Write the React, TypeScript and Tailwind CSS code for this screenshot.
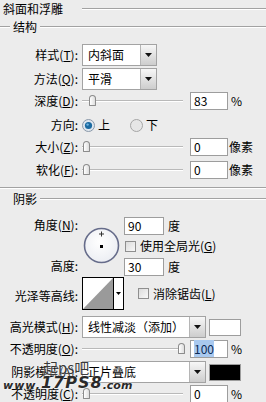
import type { ReactNode } from "react";

const Label = ({ children }: { children: ReactNode }) => (
  <div className="w-[78px] shrink-0 text-right whitespace-nowrap">{children}</div>
);

const Arrow = () => (
  <div className="w-[16px] h-full shrink-0 border-l border-[#b5b5b5] bg-gradient-to-b from-[#f7f7f7] to-[#cdcdcd] flex items-center justify-center">
    <svg width="7" height="4" viewBox="0 0 7 4">
      <path d="M0 0h7L3.5 4z" fill="#111" />
    </svg>
  </div>
);

const Dropdown = ({ value, w }: { value: string; w: string }) => (
  <div className={`${w} h-[22px] ml-[4px] flex border border-[#a3a3a3] bg-white`}>
    <span className="flex-1 pl-[5px] leading-[20px]">{value}</span>
    <Arrow />
  </div>
);

const Slider = ({ pos }: { pos: number }) => (
  <div className="relative w-[101px] h-[18px] ml-[4px] flex items-center">
    <div className="w-full h-[2px] bg-[#b9b9b9] border-b border-white" />
    <div
      className="absolute top-[3px] w-[7px] h-[11px] rounded-t-[4px] rounded-b-[1px] border border-[#8c8c8c] bg-gradient-to-r from-white to-[#dedede]"
      style={{ left: pos }}
    />
  </div>
);

const Input = ({ value, w = "w-[38px]", selected }: { value: string; w?: string; selected?: boolean }) => (
  <div className={`${w} h-[18px] border border-[#9d9d9d] bg-white pl-[3px] leading-[16px]`}>
    {selected ? <span className="bg-[#a9c9ef] text-[#0b2a55]">{value}</span> : value}
  </div>
);

const Check = () => (
  <div className="w-[11px] h-[11px] border border-[#8f8f8f] bg-gradient-to-br from-[#dcdcdc] to-[#f8f8f8]" />
);

export default function App() {
  return (
    <div className="relative w-[266px] h-[402px] overflow-hidden bg-[#ececec] text-[12px] text-black font-['Noto_Sans_CJK_SC','Noto_Sans',sans-serif]">
      {/* title */}
      <div className="h-[17px] flex items-center">
        <span className="pl-[3px] w-[82px] leading-none">斜面和浮雕</span>
        <div className="flex-1 h-[2px] border-t border-[#a2a2a2] border-b border-b-white" />
      </div>

      <div className="mt-[1px] h-[18px] flex items-center">
        <div className="w-[10px] h-[2px] border-t border-[#a2a2a2] border-b border-b-white" />
        <span className="px-[3px] leading-none">结构</span>
        <div className="flex-1 h-[2px] border-t border-[#a2a2a2] border-b border-b-white" />
      </div>

      <div className="mt-[8px] h-[22px] flex items-center">
        <Label>样式(<u>T</u>):</Label>
        <Dropdown value="内斜面" w="w-[75px]" />
      </div>
      <div className="mt-[2px] h-[22px] flex items-center">
        <Label>方法(<u>Q</u>):</Label>
        <Dropdown value="平滑" w="w-[75px]" />
      </div>
      <div className="mt-[2px] h-[18px] flex items-center">
        <Label>深度(<u>D</u>):</Label>
        <Slider pos={7} />
        <div className="ml-[7px]"><Input value="83" /></div>
        <span className="ml-[3px]">%</span>
      </div>
      <div className="mt-[6px] h-[18px] flex items-center">
        <Label>方向:</Label>
        <svg className="ml-[4px]" width="13" height="13" viewBox="0 0 13 13">
          <circle cx="6.5" cy="6.5" r="6" fill="#dfe6ee" stroke="#8a98a8" />
          <circle cx="6.5" cy="6.5" r="3.6" fill="#1c6aa0" />
          <circle cx="5.6" cy="5.6" r="1.2" fill="#6fb2e0" />
        </svg>
        <span className="ml-[3px]">上</span>
        <svg className="ml-[20px]" width="13" height="13" viewBox="0 0 13 13">
          <circle cx="6.5" cy="6.5" r="6" fill="#e6e6e6" stroke="#a5a5a5" />
        </svg>
        <span className="ml-[3px]">下</span>
      </div>
      <div className="mt-[4px] h-[18px] flex items-center">
        <Label>大小(<u>Z</u>):</Label>
        <Slider pos={1} />
        <div className="ml-[7px]"><Input value="0" /></div>
        <span className="ml-[1px]">像素</span>
      </div>
      <div className="mt-[5px] h-[18px] flex items-center">
        <Label>软化(<u>F</u>):</Label>
        <Slider pos={1} />
        <div className="ml-[7px]"><Input value="0" /></div>
        <span className="ml-[1px]">像素</span>
      </div>

      <div className="mt-[8px] h-[2px] border-t border-[#a2a2a2] border-b border-b-white" />

      <div className="h-[20px] flex items-center">
        <span className="pl-[13px] pr-[3px] leading-none">阴影</span>
        <div className="flex-1 h-[2px] border-t border-[#a2a2a2] border-b border-b-white" />
      </div>

      {/* angle block */}
      <div className="mt-[8px] h-[57px] flex">
        <div className="w-[78px] shrink-0 flex flex-col justify-between text-right">
          <div className="h-[16px] leading-[16px]">角度(<u>N</u>):</div>
          <div className="h-[16px] leading-[16px]">高度:</div>
        </div>
        <svg className="ml-[5px] mt-[10px]" width="37" height="37" viewBox="0 0 37 37">
          <defs>
            <radialGradient id="g" cx="0.45" cy="0.4" r="0.6">
              <stop offset="0" stopColor="#ffffff" />
              <stop offset="1" stopColor="#eceef3" />
            </radialGradient>
          </defs>
          <circle cx="18.5" cy="18.5" r="17" fill="url(#g)" stroke="#666c8a" strokeWidth="1.6" />
          <path d="M18.5 4.5v5M16 7h5" stroke="#333" strokeWidth="1" />
          <rect x="17" y="18" width="3" height="3" fill="#000" />
        </svg>
        <div className="ml-[4px] flex flex-col">
          <div className="flex items-center">
            <Input value="90" w="w-[40px]" />
            <span className="ml-[4px]">度</span>
          </div>
          <div className="mt-[4px] flex items-center">
            <div className="ml-[1px]"><Check /></div>
            <span className="ml-[4px] leading-[14px]">使用全局光(<u>G</u>)</span>
          </div>
          <div className="mt-[5px] flex items-center">
            <Input value="30" w="w-[40px]" />
            <span className="ml-[4px]">度</span>
          </div>
        </div>
      </div>

      <div className="mt-[3px] h-[33px] flex items-center">
        <Label><span className="relative top-[2px]">光泽等高线:</span></Label>
        <div className="ml-[4px] w-[42px] h-[33px] flex border border-black bg-white">
          <svg width="30" height="31" viewBox="0 0 30 31" className="shrink-0">
            <path d="M0 31L30 0V31z" fill="#9a9a9a" />
          </svg>
          <div className="flex-1 border-l border-black flex items-center justify-center">
            <svg width="5" height="3" viewBox="0 0 5 3"><path d="M0 0h5L2.5 3z" fill="#000" /></svg>
          </div>
        </div>
        <div className="ml-[14px]"><Check /></div>
        <span className="ml-[4px]">消除锯齿(<u>L</u>)</span>
      </div>

      <div className="mt-[6px] h-[22px] flex items-center">
        <Label>高光模式(<u>H</u>):</Label>
        <Dropdown value="线性减淡（添加）" w="w-[124px]" />
        <div className="ml-[3px] w-[32px] h-[17px] border border-[#9d9d9d] bg-white" />
      </div>
      <div className="mt-[2px] h-[18px] flex items-center">
        <Label>不透明度(<u>O</u>):</Label>
        <Slider pos={96} />
        <div className="ml-[7px]"><Input value="100" selected /></div>
        <span className="ml-[3px]">%</span>
      </div>
      <div className="mt-[3px] h-[22px] flex items-center">
        <Label>阴影模式(<u>A</u>):</Label>
        <Dropdown value="正片叠底" w="w-[124px]" />
        <div className="ml-[3px] w-[32px] h-[17px] border border-[#9d9d9d] bg-black" />
      </div>
      <div className="mt-[2px] h-[18px] flex items-center">
        <Label>不透明度(<u>C</u>):</Label>
        <Slider pos={1} />
        <div className="ml-[7px]"><Input value="0" /></div>
        <span className="ml-[3px]">%</span>
      </div>

      {/* watermark */}
      <div className="absolute left-[43px] top-[360px] text-[15px] leading-none text-[#3a3a3a] [text-shadow:0_0_2px_#fff]">
        起ps吧
      </div>
      <div className="absolute left-[3px] top-[375px] flex items-end leading-none text-[#2a2a2a] font-black italic [text-shadow:0_0_2px_#fff] font-['DejaVu_Sans',sans-serif]">
        <span className="text-[11px] tracking-[1px]">www.</span>
        <span className="text-[16px] tracking-[1px]">17PS8</span>
        <span className="text-[11px]">.com</span>
      </div>
    </div>
  );
}
